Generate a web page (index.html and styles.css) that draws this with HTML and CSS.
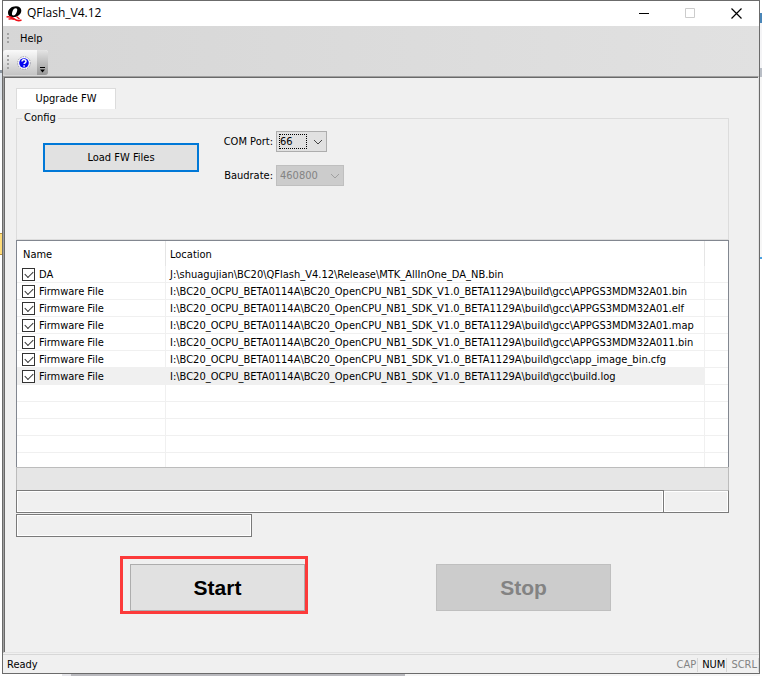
FILE: index.html
```html
<!DOCTYPE html>
<html lang="en">
<head>
<meta charset="utf-8">
<title>QFlash_V4.12</title>
<link rel="stylesheet" href="styles.css">
</head>
<body>
<div class="window">
  <header class="titlebar">
    <svg class="logo" viewBox="0 0 16 16" aria-hidden="true">
      <path d="M9.500.3C5 .3 1.500 3.200 1.500 7c0 2.600 2 4.200 5 4.200 4.500 0 8.300-2.900 8.300-6.700C14.800 2 12.800.3 9.500.3zM9.200 2.200c1.500 0 1.900 1 1.300 3-.7 2.600-1.900 4.200-3.600 4.200-1.400 0-1.800-1.100-1.200-3.200.7-2.500 1.900-4 3.500-4z" fill="#000" fill-rule="evenodd"/>
      <path d="M0 11c4-.8 6 .6 8 2.100s4.500 1.900 7 .9" fill="none" stroke="#f01018" stroke-width="1.600"/>
      <path d="M2 13.200c2.500-.8 4-.5 5.500.1M10 10.500l3 2.500" fill="none" stroke="#f01018" stroke-width="1.300"/>
    </svg>
    <h1 class="title">QFlash_V4.12</h1>
    <button class="winbtn" type="button" aria-label="Minimize"><svg viewBox="0 0 11 11"><path d="M0 5.500h10" stroke="#000"/></svg></button>
    <button class="winbtn" type="button" aria-label="Maximize" disabled><svg viewBox="0 0 11 11"><path d="M.5.5h9v9h-9z" fill="none" stroke="#ccc"/></svg></button>
    <button class="winbtn" type="button" aria-label="Close"><svg viewBox="0 0 11 11"><path d="M.5.5l10 10M10.500.5l-10 10" stroke="#000" stroke-width="1.200"/></svg></button>
  </header>
  <nav class="menubar">
    <span class="grip"></span>
    <button class="menu" type="button">Help</button>
  </nav>
  <div class="toolrow">
    <div class="toolbar">
      <span class="grip grip-tall"></span>
      <button class="tool" type="button" aria-label="About">
        <svg viewBox="0 0 14 14"><circle cx="7" cy="7" r="6.300" fill="#fff" stroke="#889" stroke-width=".8" stroke-dasharray="1.500 1"/><circle cx="7" cy="7" r="4.800" fill="#0505f0"/><path d="M5 5.500c0-2.600 4.200-2.400 4 0-.1 1.300-1.900 1.300-1.900 2.600M7.100 9.300v1.500" fill="none" stroke="#fff" stroke-width="1.500"/></svg>
      </button>
      <button class="more" type="button" aria-label="Toolbar options"><svg viewBox="0 0 7 7"><path d="M1 1.500h5" stroke="#000"/><path d="M1 3.500h5l-2.500 3z"/></svg></button>
    </div>
  </div>
  <main class="client">
    <button class="tab" type="button">Upgrade FW</button>
    <fieldset class="config">
      <legend>Config</legend>
      <button class="load" type="button">Load FW Files</button>
      <div class="fields">
        <label for="port">COM Port:</label>
        <span class="pick pick-port"><select id="port"><option>66</option></select><svg viewBox="0 0 10 6"><path d="M1 1l4 4 4-4"/></svg></span>
        <label for="baud">Baudrate:</label>
        <span class="pick pick-baud"><select id="baud" disabled><option>460800</option></select><svg viewBox="0 0 10 6"><path d="M1 1l4 4 4-4"/></svg></span>
      </div>
    </fieldset>
    <div class="list">
      <table>
        <colgroup><col class="c-name"><col><col class="c-end"></colgroup>
        <thead><tr><th>Name</th><th>Location</th><th></th></tr></thead>
        <tbody>
          <tr><td><label><input type="checkbox" checked>DA</label></td><td>J:\shuagujian\BC20\QFlash_V4.12\Release\MTK_AllInOne_DA_NB.bin</td><td></td></tr>
          <tr><td><label><input type="checkbox" checked>Firmware File</label></td><td>I:\BC20_OCPU_BETA0114A\BC20_OpenCPU_NB1_SDK_V1.0_BETA1129A\build\gcc\APPGS3MDM32A01.bin</td><td></td></tr>
          <tr><td><label><input type="checkbox" checked>Firmware File</label></td><td>I:\BC20_OCPU_BETA0114A\BC20_OpenCPU_NB1_SDK_V1.0_BETA1129A\build\gcc\APPGS3MDM32A01.elf</td><td></td></tr>
          <tr><td><label><input type="checkbox" checked>Firmware File</label></td><td>I:\BC20_OCPU_BETA0114A\BC20_OpenCPU_NB1_SDK_V1.0_BETA1129A\build\gcc\APPGS3MDM32A01.map</td><td></td></tr>
          <tr><td><label><input type="checkbox" checked>Firmware File</label></td><td>I:\BC20_OCPU_BETA0114A\BC20_OpenCPU_NB1_SDK_V1.0_BETA1129A\build\gcc\APPGS3MDM32A011.bin</td><td></td></tr>
          <tr><td><label><input type="checkbox" checked>Firmware File</label></td><td>I:\BC20_OCPU_BETA0114A\BC20_OpenCPU_NB1_SDK_V1.0_BETA1129A\build\gcc\app_image_bin.cfg</td><td></td></tr>
          <tr class="selected"><td><label><input type="checkbox" checked>Firmware File</label></td><td>I:\BC20_OCPU_BETA0114A\BC20_OpenCPU_NB1_SDK_V1.0_BETA1129A\build\gcc\build.log</td><td></td></tr>
          <tr><td></td><td></td><td></td></tr>
          <tr><td></td><td></td><td></td></tr>
          <tr><td></td><td></td><td></td></tr>
          <tr><td></td><td></td><td></td></tr>
          <tr class="last"><td></td><td></td><td></td></tr>
        </tbody>
      </table>
    </div>
    <div class="progress"></div>
    <div class="status"><div class="box grow"></div><div class="box percent"></div></div>
    <div class="box elapsed"></div>
    <div class="actions">
      <div class="slot highlight"><button class="big" type="button">Start</button></div>
      <div class="slot"><button class="big" type="button" disabled>Stop</button></div>
    </div>
  </main>
  <footer class="statusbar">
    <span class="ready">Ready</span>
    <span class="key">CAP</span><span class="key on">NUM</span><span class="key">SCRL</span>
  </footer>
</div>
</body>
</html>
```
FILE: styles.css
```css
* { box-sizing: border-box; }
body {
  margin: 0;
  padding: 0 2px 2px;
  height: 100vh;
  /* slivers of the windows that lie behind this one */
  background:
    linear-gradient(#fff 0 70px, #8c96a0 70px 73px, #dfe4ea 73px 100px, #fff 100px 233px, #b8933c 233px 234px, #ffdc78 234px 254px, #b8933c 254px 255px, #fff 255px) left / 2px 100% no-repeat,
    linear-gradient(#fff 0 13px, #4a86b8 13px 23px, #f4f4f6 23px 68px, #b9bec6 68px 77px, #f6f6f6 77px 257px, #4aa0e0 257px 259px, #fff 259px) right / 2px 100% no-repeat,
    linear-gradient(90deg, #fff 0 62px, #e6e6ea 62px 71px, #b9b9be 71px 405px, #f6f6f6 405px);
  color: #000;
  font: 11px/14px "DejaVu Sans Condensed", "Liberation Sans", sans-serif;
}
button, select { font: inherit; color: inherit; border-radius: 0; margin: 0; padding: 0; }
.window {
  display: flex;
  flex-direction: column;
  height: 100%;
  background: #f0f0f0;
  border: 1px solid #6b6b6b;
}
.titlebar { display: flex; align-items: center; height: 25px; background: #fff; padding-left: 3px; flex: none; }
.logo { width: 17px; height: 16px; }
.title { flex: 1; margin: 0 0 0 4px; padding-bottom: 2px; font: 12px/16px "Open Sans", sans-serif; }
.winbtn { width: 46px; height: 24px; border: 0; background: none; display: grid; place-items: center; }
.winbtn svg { width: 11px; height: 11px; }
.menubar { display: flex; align-items: center; height: 24px; background: linear-gradient(90deg, #d6d6d6, #e1e1e1); padding-left: 4px; flex: none; }
.grip { width: 2px; height: 11px; background: repeating-linear-gradient(#a2a2a2 0 2px, transparent 2px 4px); }
.grip-tall { height: 15px; }
.menu { border: 0; background: none; margin-left: 11px; padding-top: 2px; }
.toolrow { height: 26px; background: linear-gradient(90deg, #d6d6d6, #e1e1e1); flex: none; }
.toolbar { display: flex; align-items: center; width: 45px; height: 25px; padding-left: 4px; border-radius: 3px; background: linear-gradient(#fafafa, #c4c4c4); }
.tool { width: 14px; height: 14px; border: 0; background: none; margin-left: 8px; }
.tool svg { display: block; width: 14px; height: 14px; }
.more { width: 11px; height: 25px; margin-left: auto; border: 0; border-radius: 0 3px 3px 0; background: linear-gradient(#e4e4e4, #979797); display: grid; place-items: end center; padding-bottom: 2px; }
.more svg { width: 7px; height: 7px; }
.client {
  flex: 1;
  display: flex;
  flex-direction: column;
  padding: 11px 29px 0 12px;
  border: 1px solid #a0a0a0;
  border-right-color: #e3e3e3;
  border-bottom-color: #e3e3e3;
  box-shadow: inset 1px 1px 0 #696969;
}
.tab { width: 100px; height: 21px; background: #fff; border: 1px solid #dcdcdc; border-bottom: 0; align-self: flex-start; }
.config { margin: 2px 0 0; padding: 6px 26px; height: 129px; min-width: 0; border: 1px solid #dcdcdc; display: flex; }
.config legend { padding: 0 2px; margin-left: -21px; }
.load { width: 156px; height: 29px; margin-top: 12px; padding-top: 1px; border: 2px solid #0078d7; background: #e1e1e1; }
.fields { display: grid; grid-template-columns: 74px auto; grid-auto-rows: 21px; row-gap: 13px; column-gap: 3px; align-items: center; align-content: start; justify-items: start; }
.fields label { justify-self: end; }
.pick { position: relative; height: 21px; }
.pick-port { width: 51px; }
.pick-baud { width: 68px; }
.pick select { appearance: none; width: 100%; height: 100%; border: 1px solid #adadad; background: #e1e1e1; padding: 1px 0 0 3px; }
.pick select:disabled { background: #ccc; border-color: #bfbfbf; color: #838383; opacity: 1; }
.pick svg { position: absolute; right: 4px; top: 8px; width: 10px; height: 6px; fill: none; stroke: #444; pointer-events: none; }
.pick-port::after { content: ""; position: absolute; inset: 3px 20px 3px 3px; border: 1px dotted #000; pointer-events: none; }
.pick-baud svg { stroke: #a0a0a0; }
.list { border: 1px solid #828790; border-bottom: 0; background: #fff; }
table { width: 100%; border-collapse: separate; border-spacing: 0; table-layout: fixed; }
.c-name { width: 149px; }
.c-end { width: 23px; }
th { height: 25px; padding: 2px 5px 0 4px; text-align: left; font-weight: normal; border-right: 1px solid #e5e5e5; }
th:first-child { padding-left: 6px; }
td { height: 17px; padding: 2px 5px 0 4px; white-space: nowrap; border: solid #f0f0f0; border-width: 0 1px 1px 0; }
td:first-child { padding-left: 5px; }
th:last-child, td:last-child { border-right: 0; }
td label { display: flex; align-items: flex-start; gap: 4px; }
input { appearance: none; position: relative; width: 13px; height: 13px; margin: 0; border: 1px solid #333; background: #fff; }
input::after { content: ""; position: absolute; left: 2px; top: 2px; width: 7px; height: 4px; border: solid #333; border-width: 0 0 1px 1px; transform: rotate(-45deg); }
.selected td:not(:last-child) { background: #f0f0f0; }
.last td { height: 14px; border-bottom: 0; }
.progress { height: 23px; border: 1px solid #bcbcbc; border-bottom: 0; background: #e6e6e6; }
.status { display: flex; }
.box { height: 23px; border: 1px solid #7a7a7a; box-shadow: inset 0 0 0 1px #fff; }
.grow { flex: 1; }
.percent { width: 65px; border-left: 0; border-top-color: #bcbcbc; }
.elapsed { width: 236px; margin-top: 1px; }
.actions { display: flex; justify-content: space-between; margin: 19px 115px 0 104px; }
.slot { border: 3px solid transparent; padding: 5px 0 0 7px; }
.highlight { border-color: #fc3a3a; }
.big { display: block; width: 175px; height: 47px; border: 1px solid #adadad; background: #e1e1e1; font: bold 21px/24px "Liberation Sans", sans-serif; }
.big:disabled { background: #ccc; border-color: #bfbfbf; color: #838383; }
.statusbar { display: flex; align-items: center; height: 19px; margin-top: 1px; border-top: 1px solid #d7d7d7; padding: 2px 0 0 4px; flex: none; }
.ready { flex: 1; }
.key { color: #838383; border-right: 1px solid #d7d7d7; padding: 0 1px 0 4px; }
.on { color: #000; }
```
